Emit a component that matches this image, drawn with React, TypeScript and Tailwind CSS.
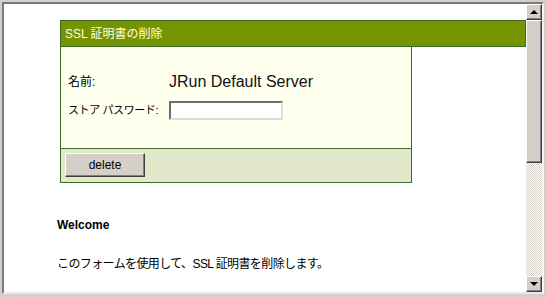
import React from "react";

const ui = { fontFamily: '"Liberation Sans", "Noto Sans CJK JP", sans-serif' };

const Raised = ({ className, children }: { className?: string; children?: React.ReactNode }) => (
  <div
    className={`border border-t-white border-l-white border-r-[#404040] border-b-[#404040] bg-[#d4d0c8] shadow-[inset_-1px_-1px_0_#808080] ${className ?? ""}`}
  >
    {children}
  </div>
);

const ScrollBar = () => (
  <div className="w-[16px] flex flex-col bg-white">
    <Raised className="h-[16px] flex items-center justify-center">
      <div className="w-0 h-0 border-l-[4px] border-r-[4px] border-b-[4px] border-l-transparent border-r-transparent border-b-black" />
    </Raised>
    <Raised className="h-[143px]" />
    <div className="flex-1 bg-[repeating-conic-gradient(#d4d0c8_0%_25%,#ffffff_0%_50%)] bg-[length:2px_2px]" />
    <Raised className="h-[16px] flex items-center justify-center">
      <div className="w-0 h-0 border-l-[4px] border-r-[4px] border-t-[4px] border-l-transparent border-r-transparent border-t-black" />
    </Raised>
  </div>
);

export default function App() {
  return (
    <div className="w-[546px] h-[297px] bg-[#d4d0c8] pt-[2px] pl-[2px] pr-[2px] pb-[3px]" style={ui}>
      <div className="h-full flex border-t-2 border-l-2 border-t-[#7a7a7a] border-l-[#7a7a7a] border-r-2 border-b-2 border-r-[#f4f4f4] border-b-[#e8e8e8]">
        <div className="flex-1 bg-white overflow-hidden pt-[16px] pl-[56px]">
          <div className="h-[27px] bg-[#759400] border border-[#3c6b28] flex items-center pl-[4px] text-[12px] text-[#ffffe6]">
            SSL 証明書の削除
          </div>
          <div className="w-[352px] border-x border-b border-[#3c6b28] text-[12px] text-black">
            <div className="bg-[#ffffee] h-[101px] pt-[25px] pl-[7px] flex flex-col gap-[8px]">
              <div className="h-[20px] flex items-center">
                <span className="w-[101px]">名前:</span>
                <span className="text-[16px] text-[#111]">JRun Default Server</span>
              </div>
              <div className="h-[20px] flex items-center">
                <span className="w-[101px] whitespace-nowrap text-[11px] tracking-[-0.4px]">ストア パスワード:</span>
                <input
                  type="password"
                  className="w-[114px] h-[19px] bg-white border-2 border-t-[#6e6e6e] border-l-[#6e6e6e] border-r-[#e0ddd6] border-b-[#e0ddd6] outline-none"
                />
              </div>
            </div>
            <div className="bg-[#e1e8c9] border-t border-[#3c6b28] h-[34px] pt-[4px] pl-[4px]">
              <button className="w-[80px] h-[24px] bg-[#d4d0c8] border border-t-white border-l-white border-r-[#404040] border-b-[#404040] shadow-[inset_-1px_-1px_0_#808080] text-[12px] text-black">
                delete
              </button>
            </div>
          </div>
          <div className="mt-[34px] ml-[-3px] text-[12px] font-bold leading-[16px] text-black">Welcome</div>
          <div className="mt-[23px] ml-[-3px] text-[12px] tracking-[-0.6px] leading-[16px] text-black">
            このフォームを使用して、SSL 証明書を削除します。
          </div>
        </div>
        <ScrollBar />
      </div>
    </div>
  );
}
